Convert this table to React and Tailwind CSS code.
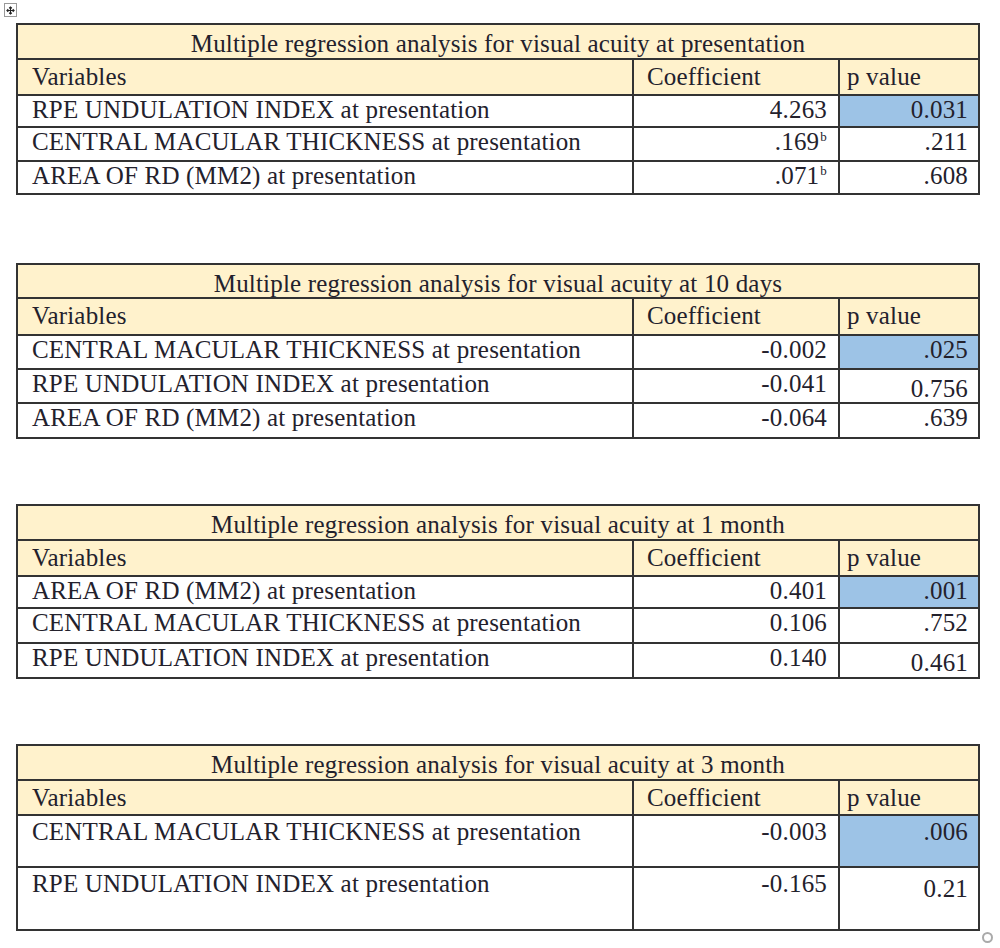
import React from 'react';

const tables = [
  {
    title: 'Multiple regression analysis for visual acuity at presentation',
    heads: [33, 36],
    rows: [
      { name: 'RPE UNDULATION INDEX at presentation', coef: '4.263', p: '0.031', hi: true, h: 32 },
      { name: 'CENTRAL MACULAR THICKNESS at presentation', coef: '.169', sup: 'b', p: '.211', h: 34 },
      { name: 'AREA OF RD (MM2) at presentation', coef: '.071', sup: 'b', p: '.608', h: 33 },
    ],
  },
  {
    title: 'Multiple regression analysis for visual acuity at 10 days',
    heads: [32, 37],
    rows: [
      { name: 'CENTRAL MACULAR THICKNESS at presentation', coef: '-0.002', p: '.025', hi: true, h: 34 },
      { name: 'RPE UNDULATION INDEX at presentation', coef: '-0.041', p: '0.756', low: true, h: 34 },
      { name: 'AREA OF RD (MM2) at presentation', coef: '-0.064', p: '.639', h: 35 },
    ],
  },
  {
    title: 'Multiple regression analysis for visual acuity at 1 month',
    heads: [33, 36],
    rows: [
      { name: 'AREA OF RD (MM2) at presentation', coef: '0.401', p: '.001', hi: true, h: 32 },
      { name: 'CENTRAL MACULAR THICKNESS at presentation', coef: '0.106', p: '.752', h: 35 },
      { name: 'RPE UNDULATION INDEX at presentation', coef: '0.140', p: '0.461', low: true, h: 35 },
    ],
  },
  {
    title: 'Multiple regression analysis for visual acuity at 3 month',
    heads: [33, 35],
    tall: true,
    rows: [
      { name: 'CENTRAL MACULAR THICKNESS at presentation', coef: '-0.003', p: '.006', hi: true, h: 52 },
      { name: 'RPE UNDULATION INDEX at presentation', coef: '-0.165', p: '0.21', low: true, h: 63 },
    ],
  },
];

const RegTable = ({ t, className }) => {
  const pt = t.tall ? 'pt-[3px]' : 'pt-[1px]';
  return (
    <div className={'w-[964px] ml-[16px] border-2 border-[#333] ' + className}>
      <div
        className='bg-[#fff2cc] text-center pt-[6px]'
        style={{ height: t.heads[0] }}
      >
        {t.title}
      </div>
      <div
        className='grid grid-cols-[614px_206px_140px] bg-[#fff2cc] border-t-2 border-[#333]'
        style={{ height: t.heads[1] }}
      >
        <div className='pl-[14px] pt-[4px]'>Variables</div>
        <div className='pl-[13px] pt-[4px] border-l-2 border-[#333]'>Coefficient</div>
        <div className='pl-[7px] pt-[4px] border-l-2 border-[#333]'>p value</div>
      </div>
      {t.rows.map((r, i) => (
        <div
          key={i}
          className='grid grid-cols-[614px_206px_140px] border-t-2 border-[#333]'
          style={{ height: r.h }}
        >
          <div className={'pl-[14px] ' + pt}>{r.name}</div>
          <div className={'pr-[11px] text-right border-l-2 border-[#333] ' + pt}>
            {r.coef}
            {r.sup && <span className='relative -top-[9px] text-[13px] leading-none ml-[1px]'>{r.sup}</span>}
          </div>
          <div
            className={
              'pr-[10px] text-right border-l-2 border-[#333] ' +
              (r.hi ? 'bg-[#9dc3e6] ' : '') +
              (r.low ? (t.tall ? 'pt-[8px]' : 'pt-[6px]') : pt)
            }
          >
            {r.p}
          </div>
        </div>
      ))}
    </div>
  );
};

export default function App() {
  return (
    <div
      className='relative w-[1000px] h-[948px] bg-white text-[#23212c] text-[25px] leading-[25px] tracking-[0.18px]'
      style={{ fontFamily: '"Liberation Serif", "Times New Roman", serif' }}
    >
      {/* table move handle */}
      <div className='absolute left-[4px] top-[3px] w-[13px] h-[14px] border border-[#999] bg-white flex items-center justify-center'>
        <svg width='9' height='9' viewBox='0 0 10 10' fill='none' stroke='#222' strokeWidth='1.2'>
          <path d='M5 1v8M1 5h8M3.5 2.5L5 1l1.5 1.5M3.5 7.5L5 9l1.5-1.5M2.5 3.5L1 5l1.5 1.5M7.5 3.5L9 5 7.5 6.5' />
        </svg>
      </div>
      <div className='pt-[23px] flex flex-col'>
        <RegTable t={tables[0]} />
        <RegTable t={tables[1]} className='mt-[68px]' />
        <RegTable t={tables[2]} className='mt-[65px]' />
        <RegTable t={tables[3]} className='mt-[65px]' />
      </div>
      {/* resize handle */}
      <div className='absolute left-[982px] top-[932px] w-[11px] h-[11px] rounded-full border-2 border-[#aaa] bg-white' />
    </div>
  );
}
